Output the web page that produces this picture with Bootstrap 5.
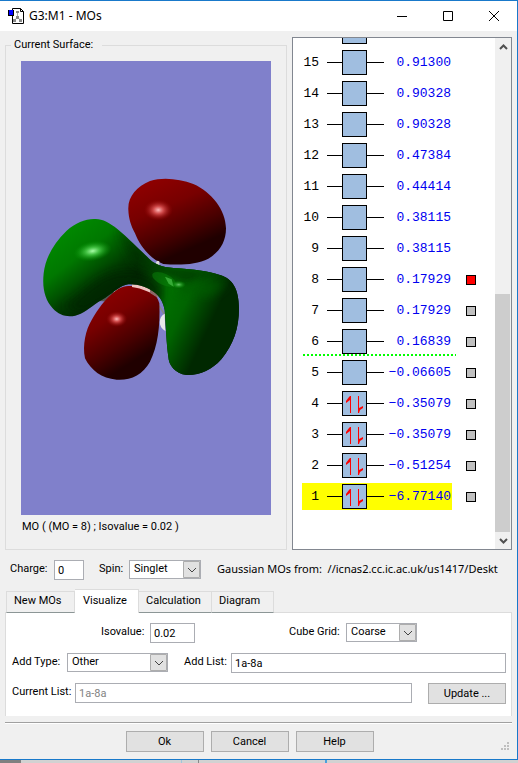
<!DOCTYPE html>
<html lang="en">
<head>
<meta charset="utf-8">
<meta name="viewport" content="width=device-width, initial-scale=1">
<title>G3:M1 - MOs</title>
<link rel="stylesheet" href="https://cdn.jsdelivr.net/npm/bootstrap@5.3.0/dist/css/bootstrap.min.css">
<style>
body{background:linear-gradient(90deg,#808080 21px,#d2d2d2 21px,#d2d2d2 181px,#9fc4dc 181px,#9fc4dc 182px,#d2d2d2 182px,#d2d2d2 198px,#888 198px,#888 199px,#d2d2d2 199px,#d2d2d2 325px,#4aa0dc 325px,#4aa0dc 327px,#d2d2d2 327px);font:11px/14px Roboto,"Liberation Sans",sans-serif;color:#000}
.mo-window{min-height:760px;background:#f0f0f0;border:1px solid #1979ca;border-left:0}
.titlebar{height:30px;background:#fff;padding-left:8px;font:12px/18px "Noto Sans","Open Sans",sans-serif}
.capbtn{width:46px;height:28px;border:0;background:none;padding:0;line-height:0}
.main-row{padding:6px 5px 0;gap:5px}
.surface{border:1px solid #dcdcdc;margin-top:1px;padding:0 15px 15px}
.surface legend{float:none;width:auto;font-size:11px;line-height:14px;margin:0 0 9px -10px;padding:0 9px 0 3px}
.viewer{display:block;width:100%;height:454px;background:#8080cb}
.caption{margin-top:5px;padding-left:1px}
.levels{width:220px;height:513px;border:1px solid #828790;background:#fff}
.level-list{overflow:hidden;padding:0 0 37px 9px}
.level-row{height:31px;flex:none;gap:14px}
.level-row.fermi{background:repeating-linear-gradient(90deg,#0f0 0 2px,transparent 2px 4px) 1px 28px/153px 2px no-repeat}
.level{height:27px;border:0;background:none;padding:0 1px 0 0;font:13px/27px "Liberation Mono",monospace;color:#000}
.level.picked{background:#ff0}
.level-no{width:25px;padding-right:8px;text-align:right}
.energy{width:67px;text-align:right;color:#0000f0}
.rung{width:15px;height:1px;background:#000}
.rung.wide{width:17px}
.orbital{width:25px;height:25px;border:1px solid #000;background:#a0bee0}
.orbital svg{display:block}
.marker{appearance:none;width:10px;height:10px;margin:0;border:1px solid #000;background:#c0c0c0}
.marker:checked{background:#f00}
.scrollbar-y{width:16px;background:#f0f0f0}
.arrow-btn{height:17px;border:0;padding:0;background:#f0f0f0;line-height:0}
.thumb{height:238px;width:15px;background:#cdcdcd}
.settings label,.panel label{line-height:18px;white-space:nowrap;flex:none}
.box-in{height:20px;border:1px solid #abadb3;background:#fff;padding:0 0 0 3px;font-size:11px;min-width:0;color:#000}
.box-in:disabled{color:#838383;background:#fff}
.combo{height:19px;border:1px solid #abadb3;border-radius:0;appearance:none;padding:0 20px 1px 4px;font-size:11px;line-height:14px;color:#000;flex:none;
background:url("data:image/svg+xml,%3Csvg xmlns='http://www.w3.org/2000/svg' width='17' height='17'%3E%3Cpath d='M.5.5h16v16H.5z' fill='%23e1e1e1' stroke='%23adadad'/%3E%3Cpath d='M5 7l4 4 4-4' fill='none' stroke='%23444'/%3E%3C/svg%3E") right center no-repeat #fff}
.settings{padding:10px 5px 0 10px;height:39px}
#charge{width:30px;flex:none;margin:0 15px 0 6px}
#spin{width:72px;margin:0 16px 0 6px}
.lab-charge{width:38px}
.lab-spin{width:24px}
.source{font:11px/18px "Noto Sans","Open Sans",sans-serif}
.mo-tabs{padding-left:6px;height:24px;position:relative;z-index:1}
.mo-tab{height:22px;border:1px solid #dcdcdc;border-left:0;border-bottom-color:#8c9696;background:#f0f0f0;padding:0 6px 2px 7px;text-align:left}
.mo-tab:first-child{border-left:1px solid #dcdcdc}
.mo-tab.current{height:24px;background:#fff;border-bottom:0;padding-bottom:2px;padding-left:8px}
.t1{width:69px}.t2{width:64px}.t3{width:73px}.t4{width:62px}
.panel{margin:-1px 5px 0;border:1px solid #dcdcdc;border-width:1px 1px 0;background:#fff;padding:10px 5px 12px 6px;gap:10px}
.field-row{gap:7px}
.line-a{padding:0 89px 0 89px}
#iso{width:45px}
#cube{width:71px}
.lab-iso{width:42px}
.lab-cube{width:50px}
.lab-type{width:48px}
.lab-add{width:40px}
.lab-cur{width:56px}
#atype{width:101px;margin-right:9px}
.upd{margin-left:9px}
.push{height:21px;width:78px;border:1px solid #adadad;background:#e1e1e1;padding:0;flex:none}
.footer-row{gap:7px;justify-content:center;margin:6px 5px 0;border-top:1px solid #a0a0a0;box-shadow:inset 0 1px #fff;padding:8px 18px 7px 0;position:relative}
.grip{position:absolute;right:3px;bottom:9px}
</style>
<script src="https://cdn.jsdelivr.net/npm/bootstrap@5.3.0/dist/js/bootstrap.bundle.min.js"></script>
</head>
<body>
<div class="mo-window d-flex flex-column">
<header class="titlebar d-flex align-items-center">
<svg class="me-1" width="17" height="16" viewBox="0 0 17 16"><path d="M4.500.5h8l3 3v12h-11z" fill="#fff" stroke="#000"/><path d="M12.500.5v3h3" fill="none" stroke="#000"/><path d="M9.500 5v4.500l-3.500 3M9.500 9.500l3.500 3" stroke="#aaa" fill="none"/><path d="M8 3h3v2H8zM8 8h3v3H8zM5 11h3v3H5zM11 11h3v3h-3z" fill="#888"/><path d="M0 2h6v6H0z" fill="#000"/><path d="M1 2h4v5H1z" fill="#00f"/></svg>
<span class="flex-grow-1">G3:M1 - MOs</span>
<button class="capbtn" aria-label="Minimize"><svg width="10" height="10"><path d="M0 5.500h10" stroke="#000"/></svg></button>
<button class="capbtn" aria-label="Maximize"><svg width="10" height="10"><path d="M.5.5h9v9h-9z" fill="none" stroke="#000"/></svg></button>
<button class="capbtn" aria-label="Close"><svg width="10" height="10"><path d="M0 0l10 10M10 0L0 10" stroke="#000"/></svg></button>
</header>
<main class="d-flex main-row">
<fieldset class="surface flex-fill">
<legend>Current Surface:</legend>
<svg class="viewer" viewBox="0 0 250 454" role="img" aria-label="Molecular orbital surface">
<defs>
<linearGradient id="r1" x1=".25" y1=".05" x2=".7" y2=".95"><stop offset="0" stop-color="#8c0000"/><stop offset=".3" stop-color="#780000"/><stop offset=".62" stop-color="#480000"/><stop offset=".85" stop-color="#200000"/></linearGradient>
<linearGradient id="g1" gradientUnits="userSpaceOnUse" x1="130" y1="190" x2="290" y2="400"><stop offset="0" stop-color="#008c00"/><stop offset=".4" stop-color="#007800"/><stop offset=".75" stop-color="#003c00"/><stop offset="1" stop-color="#002000"/></linearGradient>
<linearGradient id="g2" gradientUnits="userSpaceOnUse" x1="430" y1="440" x2="600" y2="520"><stop offset="0" stop-color="#006e00"/><stop offset=".3" stop-color="#006400"/><stop offset=".8" stop-color="#002800"/></linearGradient>
<linearGradient id="fade" gradientUnits="userSpaceOnUse" x1="350" y1="0" x2="440" y2="0"><stop offset="0" stop-color="#000"/><stop offset="1" stop-color="#fff"/></linearGradient>
<mask id="right" maskUnits="userSpaceOnUse" x="0" y="0" width="750" height="720"><path d="M0 0h750v720H0z" fill="url(#fade)"/></mask>
<radialGradient id="hr"><stop offset="0" stop-color="#ffb8b8"/><stop offset=".35" stop-color="#d85050" stop-opacity=".9"/><stop offset="1" stop-color="#900000" stop-opacity="0"/></radialGradient>
<radialGradient id="hg"><stop offset="0" stop-color="#a8ffa8"/><stop offset=".35" stop-color="#48c848" stop-opacity=".9"/><stop offset="1" stop-color="#009000" stop-opacity="0"/></radialGradient>
<filter id="soft" x="-30%" y="-30%" width="160%" height="160%"><feGaussianBlur stdDeviation="14"/></filter>
<path id="lobes" d="M222 177C245 175 268 187 292 207C330 239 365 275 388 297C410 318 435 323 475 325C520 329 560 332 600 345C638 357 656 385 657 445C657 505 640 555 604 598C575 630 540 646 500 645C465 640 446 615 445 590C439 550 438 500 434 450C430 425 419 410 405 398C385 382 350 371 325 373C300 377 285 395 256 413C225 430 205 450 182 461C155 474 122 472 98 445C75 420 66 385 71 340C76 295 100 250 140 212C165 190 195 177 222 177Z"/>
<clipPath id="inside"><use href="#lobes"/></clipPath>
</defs>
<g transform="translate(-1 99) scale(.33333)">
<path d="M325 149C323 110 350 80 390 63C430 50 480 57 520 72C575 96 617 150 618 205C618 245 600 275 565 296C530 314 480 316 430 312C395 300 360 260 345 220C332 195 326 175 325 149Z" fill="url(#r1)"/>
<ellipse cx="415" cy="150" rx="44" ry="32" fill="url(#hr)"/>
<path d="M407 308l5-6 6 2v12h-8z" fill="#ddd"/>
<path d="M238 423l40-28 8 5-4 18-15 7z" fill="#555"/><path d="M282 395l12-9 15 3-8 7-20 2z" fill="#eee"/>
<path d="M416 440l3-4 15 24v8z" fill="#888"/><path d="M434 461c-20 10-20 40 2 52z" fill="#e8e8e8"/>
<path d="M325 378C375 375 410 395 418 430C421 500 413 560 390 605C368 645 330 662 290 659C245 656 212 630 195 595C187 555 197 510 215 480C235 445 255 420 275 403C290 388 305 379 325 378Z" fill="url(#r1)"/>
<ellipse cx="290" cy="477" rx="32" ry="24" fill="url(#hr)"/>
<path d="M336 372c30 0 56 8 77 28v12c-20-15-45-26-77-31z" fill="#efc4c0"/><path d="M390 386l23 17v10l-23-14z" fill="#8b6868"/>
<use href="#lobes" fill="url(#g1)"/>
<use href="#lobes" fill="url(#g2)" mask="url(#right)"/>
<g clip-path="url(#inside)"><path d="M125 440C190 410 215 350 300 335C360 325 400 350 425 385L420 430L330 376L190 460Z" fill="#002600" filter="url(#soft)" opacity=".8"/><path d="M290 200L390 300L470 322L600 336L500 370L430 345L340 310Z" fill="#003000" filter="url(#soft)" opacity=".75"/>
<path d="M470 395C520 360 570 360 620 370L570 410Z" fill="#005c00" filter="url(#soft)" opacity=".7"/></g>
<ellipse cx="218" cy="273" rx="58" ry="30" transform="rotate(-10 218 273)" fill="url(#hg)"/>
<ellipse cx="432" cy="358" rx="38" ry="17" transform="rotate(25 432 358)" fill="#0a8a0a" opacity=".45"/><path d="M435 350l20 8 6 22-15-9z" fill="#50c850" opacity=".65"/><ellipse cx="476" cy="374" rx="22" ry="12" fill="url(#hg)" opacity=".6"/>
</g>
</svg>
<div class="caption">MO ( (MO = 8) ; Isovalue = 0.02 )</div>
</fieldset>
<section class="levels d-flex" aria-label="Orbital energies">
<div class="level-list flex-fill d-flex flex-column justify-content-end" id="levels"></div>
<div class="scrollbar-y d-flex flex-column">
<button class="arrow-btn" aria-label="Scroll up"><svg width="9" height="8"><path d="M1 6l3.500-3.500L8 6" fill="none" stroke="#505050" stroke-width="2"/></svg></button>
<div class="flex-fill"></div><div class="thumb"></div>
<button class="arrow-btn" aria-label="Scroll down"><svg width="9" height="8"><path d="M1 2l3.500 3.500L8 2" fill="none" stroke="#505050" stroke-width="2"/></svg></button>
</div>
</section>
</main>
<div class="settings d-flex align-items-start">
<label for="charge" class="lab-charge">Charge:</label><input id="charge" class="box-in" value="0">
<label for="spin" class="lab-spin">Spin:</label><select id="spin" class="combo"><option>Singlet</option></select>
<span class="source text-nowrap">Gaussian MOs from:&nbsp; //icnas2.cc.ic.ac.uk/us1417/Deskt</span>
</div>
<div class="mo-tabs d-flex align-items-end" role="tablist">
<button class="mo-tab t1" role="tab">New MOs</button><button class="mo-tab t2 current" role="tab" aria-selected="true">Visualize</button><button class="mo-tab t3" role="tab">Calculation</button><button class="mo-tab t4" role="tab">Diagram</button>
</div>
<section class="panel d-flex flex-column">
<div class="d-flex field-row line-a"><label for="iso" class="lab-iso">Isovalue:</label><input id="iso" class="box-in" value="0.02"><label for="cube" class="lab-cube ms-auto">Cube Grid:</label><select id="cube" class="combo"><option>Coarse</option></select></div>
<div class="d-flex field-row"><label for="atype" class="lab-type">Add Type:</label><select id="atype" class="combo"><option>Other</option></select><label for="alist" class="lab-add">Add List:</label><input id="alist" class="box-in flex-fill" value="1a-8a"></div>
<div class="d-flex field-row"><label for="clist" class="lab-cur">Current List:</label><input id="clist" class="box-in flex-fill" value="1a-8a" disabled><button class="push upd">Update ...</button></div>
</section>
<footer class="footer-row d-flex">
<button class="push">Ok</button><button class="push">Cancel</button><button class="push">Help</button>
<svg class="grip" width="8" height="8" fill="#bfbfbf"><path d="M6 0h2v2H6zM3 3h2v2H3zM6 3h2v2H6zM0 6h2v2H0zM3 6h2v2H3zM6 6h2v2H6z"/></svg>
</footer>
</div>
<script>
const energies=["-6.77140","-0.51254","-0.35079","-0.35079","-0.06605","0.16839","0.17929","0.17929","0.38115","0.38115","0.44414","0.47384","0.90328","0.90328","0.91300"];
const spins='<svg width="23" height="23" fill="#f00"><path d="M7 4h1v17H7V8L3 11V9L6 5zM15 4h1v12l4-2v2l-3 2-1 3h-1z"/></svg>';
const rows=energies.map((e,i)=>{
const n=i+1;
return `<div class="level-row d-flex align-items-center ${n===6?"fermi":""}"><button class="level d-flex align-items-center ${n===1?"picked":""}"><span class="level-no">${n}</span><span class="rung"></span><span class="orbital">${n<5?spins:""}</span><span class="rung wide"></span><span class="energy">${e.replace("-","−")}</span></button>${n<9?`<input type="checkbox" class="marker" aria-label="Show orbital ${n}" ${n===8?"checked":""}>`:""}</div>`;
});
rows.push('<div class="level-row d-flex align-items-center"><span class="level d-flex align-items-center"><span class="level-no"></span><span class="rung"></span><span class="orbital"></span></span></div>');
document.getElementById("levels").innerHTML=rows.reverse().join("");
</script>
</body>
</html>
